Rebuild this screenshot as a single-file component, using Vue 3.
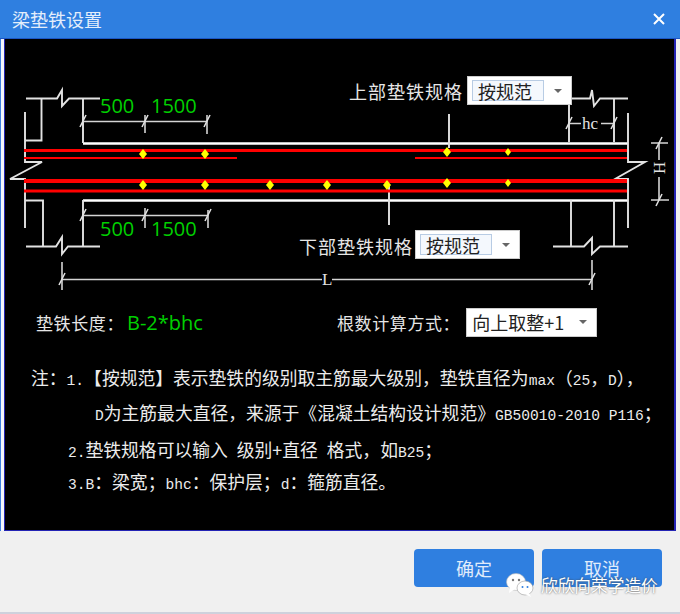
<script setup>
const frame = [
  'M26 98.5H57L62 90V106L69 98.5H100',
  'M41.5 98.5V140.5H25M25 112V162H42L10 179H25V228',
  'M25 200.5H43V246M83 98.5V143M83 200V246',
  'M26 246.5H56L62 237V254L68 246.5H100',
  'M570 98.5H590L592 90L594 106L600 98.5H628',
  'M569 105V142M614 98.5V142M628 113V162H645L615 179H628V228',
  'M571 200V246M614 200V246',
  'M553 246.5H584L592 238V254L600 246.5H628',
  'M449 114V148M389 186V225'
]
const dims = [
  'M83 121.5H207M145 115V133M207 115V134',
  'M83 215.5H208M145 208V228M208 210V228',
  'M62 262V290M62 279.5H322M332 279.5H592M592 260V290',
  'M569 123.5H581M601 123.5H614',
  'M651 143H668M651 200H669M659 143V160M659 177V200'
]
const slashes = [
  [83, 121], [145, 121], [207, 121], [83, 215], [145, 215], [208, 215],
  [62, 279], [592, 279], [569, 123], [614, 123], [659, 143], [659, 200]
]
const bars = [
  { x1: 24, x2: 627, y: 150.5, w: 3 },
  { x1: 24, x2: 237, y: 158, w: 2 },
  { x1: 415, x2: 627, y: 158, w: 2 },
  { x1: 24, x2: 627, y: 181, w: 4 },
  { x1: 24, x2: 627, y: 191, w: 3 }
]
const bolts = [
  [143, 154, 4], [205, 154, 4], [447, 152, 4], [508, 152, 3],
  [143, 185, 4], [205, 185, 4], [270, 185, 4], [327, 185, 4],
  [387, 185, 4], [447, 183, 4], [508, 183, 3]
]
const diamond = ([x, y, r]) => `${x - r},${y} ${x},${y - r - 1} ${x + r},${y} ${x},${y + r + 1}`
</script>

<template>
  <div class="dialog">
    <header class="titlebar">
      <span class="title">梁垫铁设置</span>
      <svg class="close" width="12" height="12" viewBox="0 0 12 12">
        <path d="M1 1L11 11M11 1L1 11" stroke="#fff" stroke-width="2" />
      </svg>
    </header>

    <main class="panel">
      <div class="canvas">
        <svg width="669" height="257" viewBox="5 39 669 257">
          <path d="M83 143.5H628M83 200.5H628" stroke="#fff" stroke-width="2.4" fill="none" />
          <path v-for="d in frame" :key="d" :d="d" stroke="#e2e2e2" stroke-width="1.9" fill="none" />
          <path v-for="d in dims" :key="d" :d="d" stroke="#d4d4d4" stroke-width="1.6" fill="none" />
          <path
            v-for="s in slashes"
            :key="s.join()"
            :d="`M${s[0] - 3} ${s[1] + 6}L${s[0] + 3} ${s[1] - 6}`"
            stroke="#e2e2e2"
            stroke-width="1.5"
          />
          <line
            v-for="b in bars"
            :key="b.y + '-' + b.x1"
            :x1="b.x1"
            :x2="b.x2"
            :y1="b.y"
            :y2="b.y"
            :stroke-width="b.w"
            stroke="#f00"
          />
          <polygon v-for="b in bolts" :key="b.join()" :points="diamond(b)" fill="#ff0" />

          <g class="green">
            <text x="100" y="113">500</text>
            <text x="151" y="113">1500</text>
            <text x="100" y="236">500</text>
            <text x="151" y="236">1500</text>
          </g>
          <g class="cad">
            <text x="349" y="99">上部垫铁规格</text>
            <text x="299" y="254">下部垫铁规格</text>
          </g>
          <text class="mark" x="582" y="129">hc</text>
          <text class="mark" x="322" y="285">L</text>
          <text class="mark" transform="translate(654 168) rotate(90)" text-anchor="middle">H</text>
        </svg>

        <div class="select top">
          <span class="value boxed">按规范</span>
          <i class="arrow"></i>
        </div>
        <div class="select bottom">
          <span class="value boxed">按规范</span>
          <i class="arrow"></i>
        </div>
      </div>

      <div class="calc-row">
        <div class="field">
          <span class="label">垫铁长度&#xFF1A;</span>
          <span class="formula">B-2*bhc</span>
        </div>
        <div class="field">
          <span class="label">根数计算方式&#xFF1A;</span>
          <div class="select round">
            <span class="value">向上取整+1</span>
            <i class="arrow"></i>
          </div>
        </div>
      </div>

      <div class="notes">
        <p class="n1">注&#xFF1A;<b>1.</b>【按规范】表示垫铁的级别取主筋最大级别&#xFF0C;垫铁直径为<small>max</small>&#xFF08;<b>25</b>&#xFF0C;<b>D</b>&#xFF09;&#xFF0C;</p>
        <p class="n2"><b>D</b>为主筋最大直径&#xFF0C;来源于《混凝土结构设计规范》<b>GB50010-2010 P116</b>&#xFF1B;</p>
        <p class="n3"><b>2.</b>垫铁规格可以输入<i class="gap"></i>级别+直径<i class="gap"></i>格式&#xFF0C;如<b>B25</b>&#xFF1B;</p>
        <p class="n4"><b>3.B</b>&#xFF1A;梁宽&#xFF1B;<b>bhc</b>&#xFF1A;保护层&#xFF1B;<b>d</b>&#xFF1A;箍筋直径。</p>
      </div>
    </main>

    <footer class="actions">
      <button>确定</button>
      <button>取消</button>
    </footer>

    <div class="watermark">
      <svg width="28" height="24" viewBox="0 0 28 24">
        <ellipse cx="10" cy="9" rx="9.5" ry="8.5" fill="#fff" stroke="#bbb" stroke-width=".6" />
        <path d="M4 14L3 20L9 16Z" fill="#fff" />
        <ellipse cx="19" cy="15" rx="8" ry="7" fill="#fff" stroke="#999" stroke-width=".6" />
        <path d="M23 20L25 24L19 21Z" fill="#fff" />
        <circle cx="7" cy="7" r="1.2" fill="#777" />
        <circle cx="13" cy="7" r="1.2" fill="#777" />
        <circle cx="16.5" cy="14" r="1" fill="#2f7fe0" />
        <circle cx="21.5" cy="14" r="1" fill="#2f7fe0" />
      </svg>
      <span>欣欣向荣学造价</span>
    </div>
  </div>
</template>

<style scoped>
.dialog {
  position: relative;
  width: 680px;
  height: 614px;
  display: flex;
  flex-direction: column;
  box-sizing: border-box;
  background: #f0f0f0;
  border-bottom: 2px solid #ced1dc;
  font-family: "Noto Sans CJK SC", sans-serif;
  overflow: hidden;
}
.titlebar {
  height: 38px;
  flex: none;
  display: flex;
  align-items: center;
  justify-content: space-between;
  padding: 0 15px 0 12px;
  background: #2f7fe0;
  border-bottom: 1px solid #1c56c4;
}
.title {
  color: #e4eefb;
  font-size: 18px;
}
.panel {
  width: 669px;
  height: 491px;
  flex: none;
  box-sizing: content-box;
  margin-left: 4px;
  background: #000;
  border: solid #2424b4;
  border-width: 0 2px 1px 1px;
  box-shadow: -3px 0 0 #f4f6fb, -4px 0 0 #3d7fe0;
}
.canvas {
  position: relative;
  height: 257px;
}
.canvas svg {
  display: block;
}
.green text {
  fill: #00d000;
  font-family: "Open Sans", sans-serif;
  font-size: 20px;
}
.cad text {
  fill: #e6e6e6;
  font-size: 18px;
  letter-spacing: 1px;
}
.mark {
  fill: #e2e2e2;
  font-family: "Liberation Serif", serif;
  font-size: 17px;
}
.select {
  display: flex;
  align-items: center;
  box-sizing: border-box;
  height: 29px;
  padding-left: 4px;
  background: #fff;
  border: 1px solid #ccc;
  color: #222;
  font-size: 18px;
}
.select.top {
  position: absolute;
  left: 462px;
  top: 37px;
  width: 105px;
}
.select.bottom {
  position: absolute;
  left: 410px;
  top: 191px;
  width: 105px;
}
.value {
  line-height: 20px;
}
.boxed {
  width: 72px;
  box-sizing: border-box;
  height: 21px;
  padding-left: 5px;
  border: 1px solid #b8cce4;
  background: #f4f8fd;
}
.arrow {
  width: 0;
  height: 0;
  margin-left: auto;
  margin-right: 9px;
  border: 4px solid transparent;
  border-top: 4px solid #666;
  border-bottom: 0;
}
.calc-row {
  display: grid;
  grid-template-columns: 301px auto;
  justify-content: start;
  height: 30px;
  margin-top: 11px;
  padding-left: 31px;
}
.field {
  display: flex;
  align-items: center;
}
.label {
  color: #e6e6e6;
  font-size: 17px;
  letter-spacing: .6px;
}
.formula {
  margin-left: 3px;
  color: #00d000;
  font-family: "Open Sans", sans-serif;
  font-size: 20px;
}
.select.round {
  flex: none;
  width: 131px;
  margin-left: 6px;
  padding-left: 5px;
}
.notes {
  margin-top: 28px;
  color: #ececec;
  font-size: 17.8px;
}
.notes p {
  margin: 0;
  height: 24px;
  line-height: 24px;
  white-space: pre;
}
.notes b,
.notes small {
  font-family: "Liberation Mono", monospace;
  font-size: 14.6px;
  font-weight: 400;
}
.gap {
  display: inline-block;
  width: 9px;
}
.n1 {
  padding-left: 26px;
}
.notes .n2 {
  margin-top: 11px;
  padding-left: 90px;
}
.notes .n3 {
  margin-top: 13px;
  padding-left: 63px;
}
.notes .n4 {
  margin-top: 8px;
  padding-left: 63px;
}
.actions {
  display: flex;
  justify-content: flex-end;
  gap: 8px;
  padding: 18px 18px 0 0;
}
button {
  width: 120px;
  height: 38px;
  border: 0;
  border-radius: 4px;
  background: #2f7fe0;
  color: #e0ecfb;
  font-family: inherit;
  font-size: 18px;
}
.watermark {
  position: absolute;
  left: 506px;
  top: 573px;
  display: flex;
  align-items: center;
  gap: 7px;
  color: #fff;
  font-size: 16.7px;
  text-shadow: 0 0 2px #444;
}
</style>
